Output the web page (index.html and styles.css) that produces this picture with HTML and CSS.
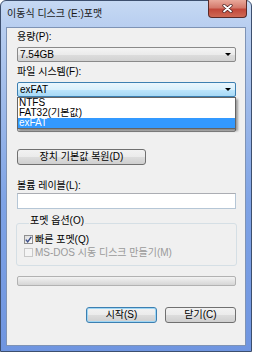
FILE: index.html
```html
<!DOCTYPE html>
<html lang="ko">
<head>
    <meta charset="UTF-8">
    <meta name="viewport" content="width=device-width, initial-scale=1.0">
    <title>이동식 디스크 (E:)포맷</title>
    <link rel="stylesheet" href="styles.css">
</head>
<body>
    <div class="window">
        <div class="titlebar">
            <span class="title">이동식 디스크 (E:)포맷</span>
            <div class="close-btn">
                <svg width="11" height="9" viewBox="0 0 11 9">
                    <path d="M2 1.5 L9 7.5 M9 1.5 L2 7.5" stroke="#4a1d1d" stroke-width="3.2" stroke-linecap="round"/>
                    <path d="M2 1.5 L9 7.5 M9 1.5 L2 7.5" stroke="#ffffff" stroke-width="1.8" stroke-linecap="round"/>
                </svg>
            </div>
        </div>

        <div class="client">
            <div class="label first">용량(P):</div>
            <div class="combo"><span>7.54GB</span><i class="arrow"></i></div>

            <div class="label">파일 시스템(F):</div>
            <div class="combo-wrap">
                <div class="combo focused"><span>exFAT</span><i class="arrow"></i></div>
                <!-- 열린 드롭다운 목록 -->
                <ul class="dropdown">
                    <li>NTFS</li>
                    <li>FAT32(기본값)</li>
                    <li class="selected">exFAT</li>
                </ul>
            </div>

            <div class="label">할당 단위 크기(A):</div>
            <div class="combo"><span>128KB</span><i class="arrow"></i></div>

            <button class="btn restore">장치 기본값 복원(D)</button>

            <div class="label volume">볼륨 레이블(L):</div>
            <div class="textbox"></div>

            <fieldset class="options">
                <legend>포멧 옵션(O)</legend>
                <div class="check">
                    <span class="box checked">
                        <svg width="7" height="7" viewBox="0 0 7 7">
                            <path d="M0.8 3.6 L2.7 5.8 L6.3 0.8" fill="none" stroke="#3c4f8a" stroke-width="1.4"/>
                        </svg>
                    </span>
                    빠른 포멧(Q)
                </div>
                <div class="check disabled">
                    <span class="box"></span>
                    MS-DOS 시동 디스크 만들기(M)
                </div>
            </fieldset>

            <div class="progress"></div>

            <div class="actions">
                <button class="btn default">시작(S)</button>
                <button class="btn">닫기(C)</button>
            </div>
        </div>
    </div>
</body>
</html>
```

FILE: styles.css
```css
body {
    margin: 0;
    background: #ffffff;
    font-family: "Liberation Sans", "Noto Sans CJK KR", sans-serif;
    font-size: 10px;
    color: #000;
}
.window {
    box-sizing: border-box;
    width: 252px;
    height: 352px;
    border: 1px solid #3d4f6e;
    border-radius: 6px 6px 0 0;
    background: linear-gradient(to bottom, #c6d9f3 0, #b8cef0 26px, #a2bdea 90px, #7fa3e5 200px, #6f95e0 100%);
    display: flex;
    flex-direction: column;
}
.titlebar {
    height: 26px;
    display: flex;
    justify-content: space-between;
    align-items: flex-start;
}
.title {
    margin: 7px 0 0 6px;
    font-size: 10px;
    line-height: 12px;
    color: #1a1a1a;
}
.close-btn {
    box-sizing: border-box;
    width: 39px;
    height: 18px;
    margin: -1px 4px 0 0;
    border: 1px solid #5a2a28;
    border-top: none;
    border-radius: 0 0 4px 4px;
    background: linear-gradient(to bottom, #e9a99b 0, #d47a6c 45%, #c2483a 55%, #cf6a55 100%);
    display: flex;
    align-items: center;
    justify-content: center;
}
.client {
    flex: 1;
    margin: 0 5px 5px 5px;
    border: 1px solid #7e93b5;
    background: #f0f0f0;
    padding: 0 9px 0 10px;
}
.label {
    line-height: 14px;
    height: 14px;
    margin: 3px 0 3px 0;
}
.label.first {
    margin-top: 2px;
}
.label.volume {
    margin-top: 14px;
    margin-bottom: 0;
}
.combo {
    box-sizing: border-box;
    height: 15px;
    border: 1px solid #8a8a8a;
    border-radius: 2px;
    background: linear-gradient(to bottom, #f4f4f4 0, #ebebeb 50%, #dddddd 51%, #d2d2d2 100%);
    display: flex;
    align-items: center;
    justify-content: space-between;
    padding: 0 4px 0 2px;
    line-height: 13px;
}
.combo.focused {
    border-color: #3c7fb1;
    background: linear-gradient(to bottom, #eaf6fd 0, #d9f0fc 50%, #bee6fd 51%, #a7d9f5 100%);
}
.arrow {
    width: 0;
    height: 0;
    border-left: 3px solid transparent;
    border-right: 3px solid transparent;
    border-top: 3px solid #000;
}
.combo-wrap {
    position: relative;
}
.dropdown {
    position: absolute;
    top: 15px;
    left: 0;
    right: 0;
    z-index: 2;
    margin: 0;
    padding: 0;
    list-style: none;
    background: #fff;
    border: 1px solid #646464;
    box-shadow: 2px 2px 2px rgba(0,0,0,0.35);
}
.dropdown li {
    height: 10px;
    line-height: 10px;
    padding-left: 1px;
    overflow: hidden;
}
.dropdown li.selected {
    background: #3399ff;
    color: #fff;
}
.btn {
    box-sizing: border-box;
    height: 16px;
    border: 1px solid #707070;
    border-radius: 3px;
    background: linear-gradient(to bottom, #f2f2f2 0, #ebebeb 50%, #dddddd 51%, #cfcfcf 100%);
    font-family: inherit;
    font-size: 10px;
    line-height: 12px;
    padding: 0;
    color: #000;
}
.btn.restore {
    display: block;
    width: 129px;
    margin-top: 17px;
}
.textbox {
    box-sizing: border-box;
    height: 16px;
    border: 1px solid #b5c6d6;
    border-top-color: #abadb3;
    background: #fff;
}
.options {
    margin: 6px -1px 0 -1px;
    padding: 2px 0 6px 7px;
    border: 1px solid #d5dfe5;
    border-radius: 3px;
}
.options legend {
    padding: 0 1px 4px 1px;
    line-height: 12px;
    margin-left: 5px;
}
.check {
    display: flex;
    align-items: center;
    height: 13px;
    line-height: 13px;
}
.check.disabled {
    color: #9a9a9a;
}
.box {
    box-sizing: border-box;
    width: 9px;
    height: 9px;
    margin-right: 2px;
    border: 1px solid #8f8f8f;
    background: linear-gradient(135deg, #dcdcdc 0, #fbfbfb 100%);
    display: flex;
    align-items: center;
    justify-content: center;
}
.check.disabled .box {
    border-color: #c8c8c8;
    background: #f4f4f4;
}
.progress {
    box-sizing: border-box;
    height: 10px;
    margin-top: 10px;
    border: 1px solid #b2b2b2;
    border-radius: 2px;
    background: linear-gradient(to bottom, #f3f3f3 0, #e4e4e4 50%, #d6d6d6 100%);
}
.actions {
    display: flex;
    justify-content: flex-end;
    gap: 8px;
    margin-top: 21px;
}
.actions .btn {
    width: 71px;
    height: 16px;
}
.btn.default {
    border-color: #3c7fb1;
    box-shadow: inset 0 0 0 1px #9fd6f4;
}
```
